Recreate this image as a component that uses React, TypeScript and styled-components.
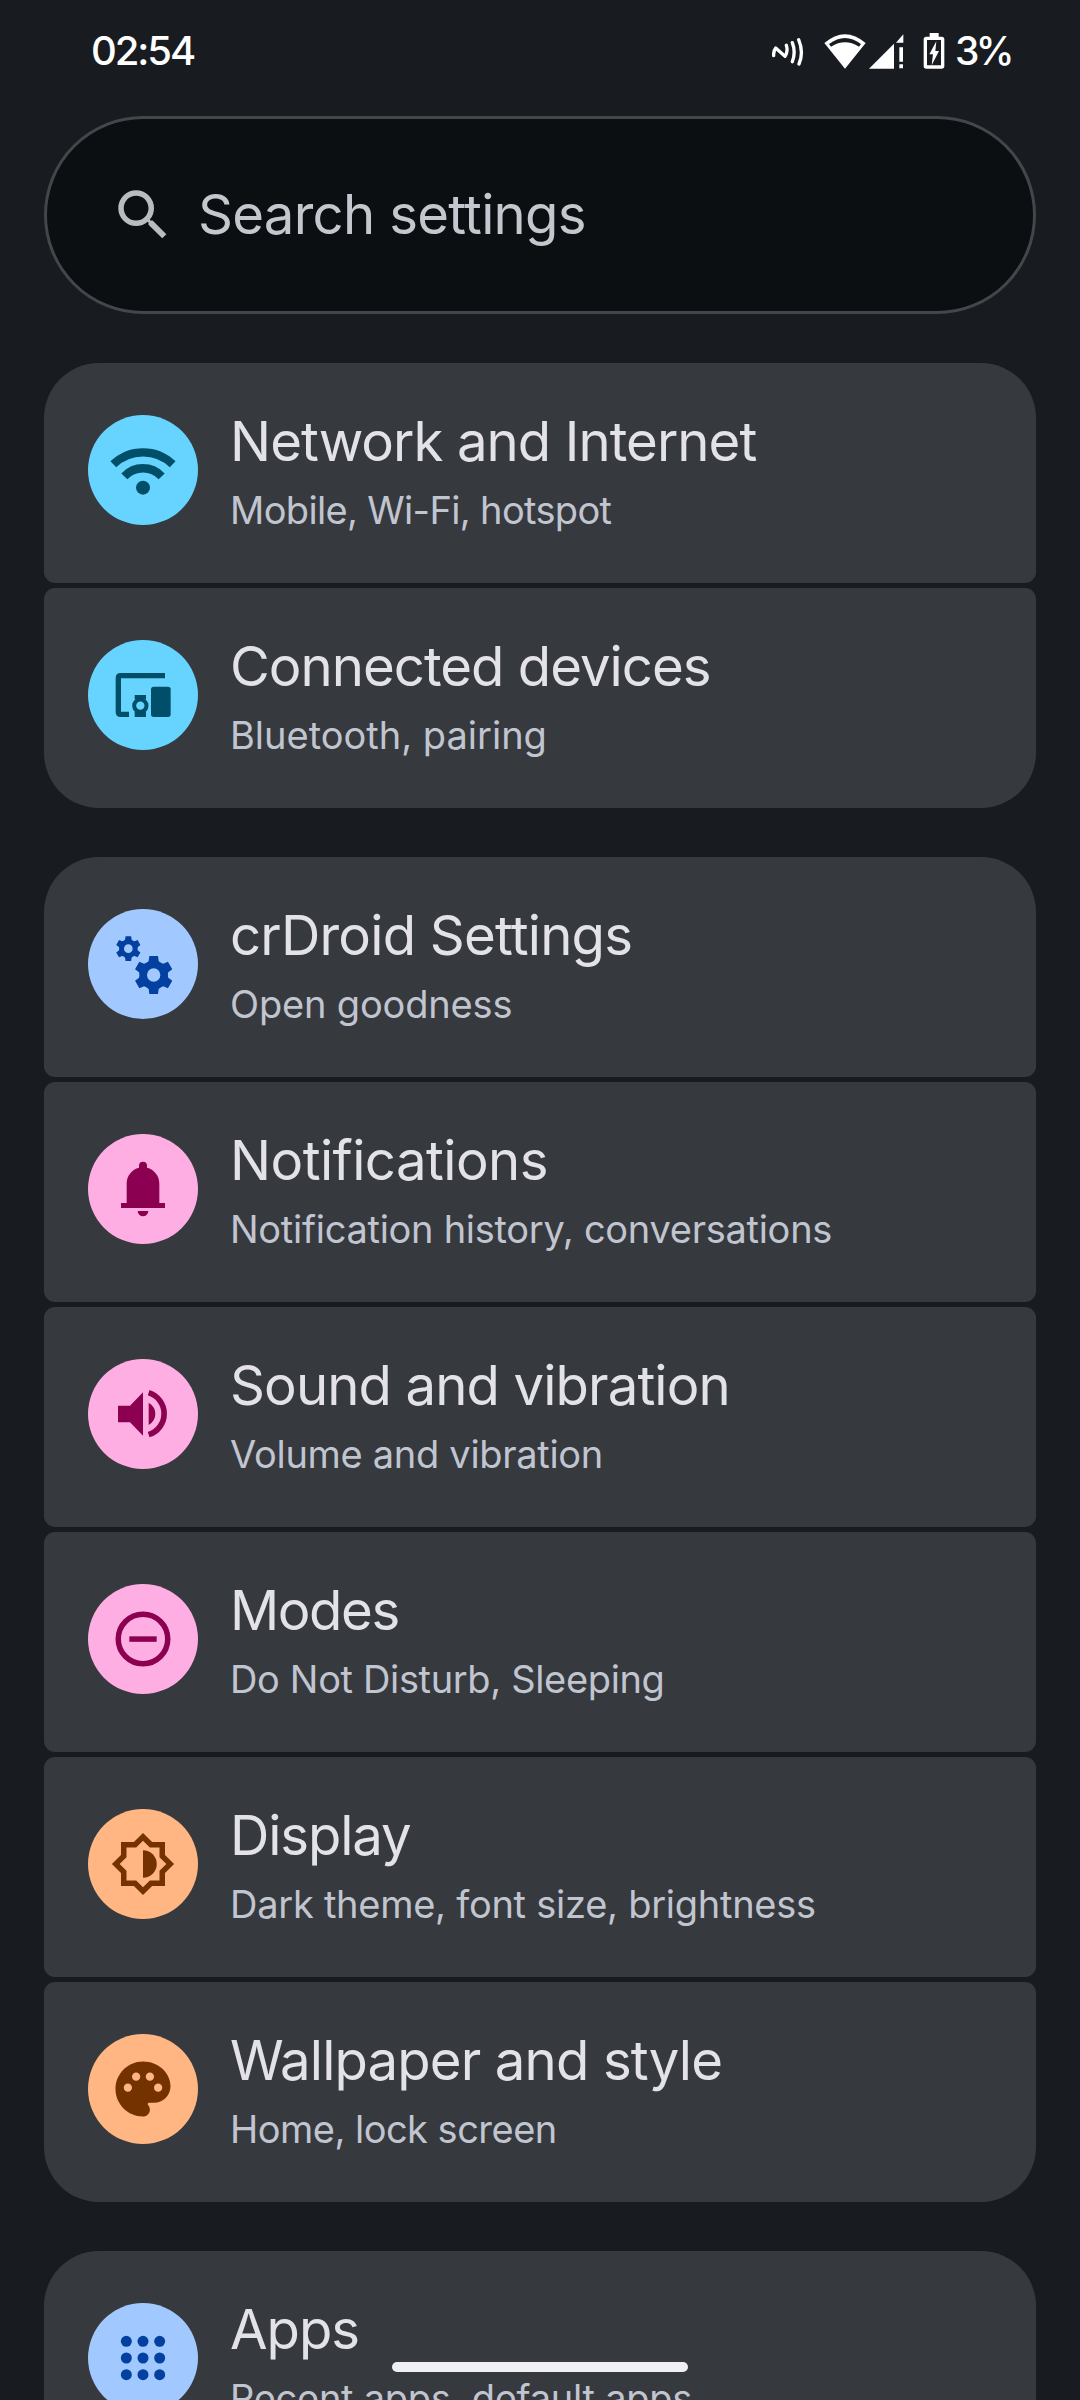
import React from "react";
import styled, { createGlobalStyle } from "styled-components";

const GlobalStyle = createGlobalStyle`
  *, *::before, *::after { box-sizing: border-box; }
  body {
    margin: 0;
    background: #181b20;
    font-family: Inter, Roboto, sans-serif;
  }
`;

const Screen = styled.div`
  position: relative;
  display: flex;
  flex-direction: column;
  width: 1080px;
  height: 2400px;
  overflow: hidden;
  background: #181b20;
`;

const StatusBar = styled.header`
  display: flex;
  align-items: flex-start;
  justify-content: space-between;
  flex: none;
  height: 116px;
  padding: 27px 68px 0 91px;
  color: #fff;
`;

const Clock = styled.time`
  font-size: 40px;
  font-weight: 500;
  line-height: 48px;
  letter-spacing: -2.1px;
`;

const StatusIcons = styled.div`
  display: flex;
  align-items: flex-start;
`;

const StatusGlyph = styled.svg<{ $w: number; $h: number; $top: number; $gap: number }>`
  display: block;
  flex: none;
  width: ${(p) => p.$w}px;
  height: ${(p) => p.$h}px;
  margin: ${(p) => p.$top}px ${(p) => p.$gap}px 0 0;
`;

const BatteryLevel = styled.span`
  width: 57px;
  font-size: 39px;
  font-weight: 500;
  line-height: 48px;
  letter-spacing: -3.6px;
  white-space: nowrap;
`;

const SearchBar = styled.div`
  display: flex;
  align-items: center;
  flex: none;
  height: 198px;
  margin: 0 44px;
  padding: 0 63px;
  border: 3px solid #43474b;
  border-radius: 99px;
  background: #0b0f12;
`;

const SearchIcon = styled.svg`
  width: 66px;
  height: 66px;
  margin-right: 22px;
  fill: #b9bbbc;
`;

const SearchHint = styled.span`
  margin-top: -2px;
  font-size: 54.5px;
  line-height: 64px;
  letter-spacing: -0.72px;
  color: #c4c7cd;
`;

const Groups = styled.main`
  display: flex;
  flex-direction: column;
  gap: 49px;
  padding: 49px 44px 0;
`;

const Group = styled.section`
  display: flex;
  flex-direction: column;
  flex: none;
  gap: 5px;
`;

const Card = styled.a`
  display: flex;
  align-items: flex-start;
  flex: none;
  height: 220px;
  padding-left: 44px;
  border-radius: 11px;
  background: #36393e;

  &:first-child {
    border-top-left-radius: 55px;
    border-top-right-radius: 55px;
  }
  &:last-child {
    border-bottom-left-radius: 55px;
    border-bottom-right-radius: 55px;
  }
`;

const Badge = styled.svg<{ $bg: string; $fg: string }>`
  display: block;
  flex: none;
  width: 110px;
  height: 110px;
  margin: 52px 32px 0 0;
  border-radius: 50%;
  background: ${(p) => p.$bg};
  color: ${(p) => p.$fg};
  fill: ${(p) => p.$fg};
`;

const Labels = styled.div`
  display: flex;
  flex-direction: column;
  gap: 13px;
  padding-top: 46px;
  white-space: nowrap;
`;

const Title = styled.span<{ $track: number }>`
  font-size: 54.5px;
  line-height: 64px;
  letter-spacing: ${(p) => p.$track}px;
  color: #e2e2e8;
`;

const Summary = styled.span<{ $track: number }>`
  font-size: 38px;
  line-height: 48px;
  letter-spacing: ${(p) => p.$track}px;
  color: #c1c5d0;
`;

const GestureBar = styled.div`
  position: absolute;
  left: 392px;
  bottom: 28px;
  width: 296px;
  height: 10px;
  border-radius: 5px;
  background: #f0f0f4;
`;

const sky = { bg: "#67d4ff", fg: "#004e68" };
const blue = { bg: "#a1c9ff", fg: "#0340a0" };
const pink = { bg: "#ffaee4", fg: "#8b0051" };
const orange = { bg: "#ffb683", fg: "#733200" };

type Palette = typeof sky;

function Gear({ x, y, scale }: { x: number; y: number; scale: number }) {
  return (
    <g transform={`translate(${x} ${y}) scale(${scale})`}>
      <circle r="31.5" fill="none" stroke="currentColor" strokeWidth="23" />
      {[0, 60, 120, 180, 240, 300].map((a) => (
        <path key={a} d="M-19 -37L-15 -42L-13 -57H13L15 -42L19 -37Z" transform={`rotate(${a})`} />
      ))}
    </g>
  );
}

const wifiIcon = (
  <>
    <g fill="none" stroke="currentColor" strokeWidth="25">
      <path d="M76 148A128 128 0 0 1 254 148" />
      <path d="M109 184A77 77 0 0 1 221 184" />
    </g>
    <circle cx="165" cy="218" r="21" />
  </>
);

const devicesIcon = (
  <>
    <path d="M231 107H98Q91 107 91 114V216Q91 223 98 223H123" fill="none" stroke="currentColor" strokeWidth="16" />
    <rect x="189" y="140" width="59" height="91" rx="8" />
    <path d="M140 165H174V178H140ZM140 216H174V231H140Z" />
    <circle cx="157" cy="197" r="18.5" fill="none" stroke="currentColor" strokeWidth="12" />
  </>
);

const gearsIcon = (
  <>
    <Gear x={121} y={119} scale={0.65} />
    <Gear x={197} y={198} scale={1} />
  </>
);

const bellIcon = (
  <path d="M99 207H116V149C116 125 132 106 153 101V95A12 12 0 0 1 177 95V101C198 106 214 125 214 149V207H231V222H99ZM149 231H181A16 16 0 0 1 149 231Z" />
);

const volumeIcon = (
  <>
    <path d="M90 140H126L165 100V230L126 190H90ZM182 131Q202 143 202 165Q202 186 182 198Z" />
    <path d="M182 101A66 66 0 0 1 182 227" fill="none" stroke="currentColor" strokeWidth="17" />
  </>
);

const modesIcon = (
  <>
    <circle cx="165" cy="165" r="74.3" fill="none" stroke="currentColor" strokeWidth="16.5" />
    <rect x="124" y="157" width="82" height="16.5" />
  </>
);

const displayIcon = (
  <g transform="translate(66 66) scale(8.25)">
    <path
      fillRule="evenodd"
      d="M20 8.69V4h-4.69L12 .69 8.69 4H4v4.69L.69 12 4 15.31V20h4.69L12 23.31 15.31 20H20v-4.69L23.31 12ZM18 14.48V18h-3.52L12 20.48 9.52 18H6v-3.52L3.52 12 6 9.52V6h3.52L12 3.52 14.48 6H18v3.52L20.48 12Z"
    />
    <path d="M12 7v10a5 5 0 0 0 0-10Z" />
  </g>
);

const paletteIcon = (
  <g transform="translate(66 66) scale(8.25)">
    <path d="M12 2C6.49 2 2 6.49 2 12s4.49 10 10 10c1.38 0 2.5-1.12 2.5-2.5 0-.61-.23-1.2-.64-1.67-.08-.1-.13-.21-.13-.33 0-.28.22-.5.5-.5H16c3.31 0 6-2.69 6-6 0-4.96-4.49-9-10-9Z" />
    <g fill={orange.bg}>
      <circle cx="6.5" cy="11.5" r="1.5" />
      <circle cx="9.5" cy="7.5" r="1.5" />
      <circle cx="14.5" cy="7.5" r="1.5" />
      <circle cx="17.5" cy="11.5" r="1.5" />
    </g>
  </g>
);

const appsIcon = (
  <>
    {[115, 165, 215].map((y) =>
      [115, 165, 215].map((x) => <circle key={`${x}-${y}`} cx={x} cy={y} r="16.5" />)
    )}
  </>
);

interface Entry {
  title: string;
  track: number;
  summary: string;
  summaryTrack: number;
  palette: Palette;
  icon: React.ReactNode;
}

const groups: Entry[][] = [
  [
    { title: "Network and Internet", track: -0.93, summary: "Mobile, Wi-Fi, hotspot", summaryTrack: -0.66, palette: sky, icon: wifiIcon },
    { title: "Connected devices", track: -0.98, summary: "Bluetooth, pairing", summaryTrack: 0, palette: sky, icon: devicesIcon },
  ],
  [
    { title: "crDroid Settings", track: -0.78, summary: "Open goodness", summaryTrack: -0.17, palette: blue, icon: gearsIcon },
    { title: "Notifications", track: -0.55, summary: "Notification history, conversations", summaryTrack: -0.28, palette: pink, icon: bellIcon },
    { title: "Sound and vibration", track: -0.88, summary: "Volume and vibration", summaryTrack: -0.3, palette: pink, icon: volumeIcon },
    { title: "Modes", track: -1.4, summary: "Do Not Disturb, Sleeping", summaryTrack: -0.35, palette: pink, icon: modesIcon },
    { title: "Display", track: -1.1, summary: "Dark theme, font size, brightness", summaryTrack: -0.26, palette: orange, icon: displayIcon },
    { title: "Wallpaper and style", track: -0.86, summary: "Home, lock screen", summaryTrack: -0.52, palette: orange, icon: paletteIcon },
  ],
  [
    { title: "Apps", track: -1, summary: "Recent apps, default apps", summaryTrack: -0.26, palette: blue, icon: appsIcon },
  ],
];

export default function App() {
  return (
    <>
      <GlobalStyle />
      <Screen>
        <StatusBar>
          <Clock>02:54</Clock>
          <StatusIcons>
            <StatusGlyph $w={33} $h={30} $top={10} $gap={19} viewBox="94 80 99 90" fill="none" stroke="#fff" strokeWidth="10" strokeLinecap="round">
              <path d="M99 136Q98 122 105 113L133 138Q143 124 137 105" strokeLinejoin="round" />
              <path d="M155 97Q166 126 155 154M174 88Q190 126 175 161" />
            </StatusGlyph>
            <StatusGlyph $w={42} $h={36} $top={6} $gap={3} viewBox="251 69 126 108">
              <path d="M252 99Q314 46 376 99L314 176Z" fill="#fff" />
              <path d="M266 102Q314 66 362 102L356 110Q314 84 272 110Z" fill="#181b20" />
            </StatusGlyph>
            <StatusGlyph $w={35} $h={35} $top={7} $gap={19} viewBox="386 72 105 105" fill="#fff">
              <path d="M386 176L461 101V176ZM467 98L489 73V98ZM477 112H488V155H477ZM477 163H488V175H477Z" />
            </StatusGlyph>
            <StatusGlyph $w={22} $h={36} $top={6} $gap={10} viewBox="547 69 66 108">
              <rect x="554" y="85" width="52" height="86" rx="3" fill="none" stroke="#fff" strokeWidth="10" />
              <path d="M567 69H594V84H567ZM587 94L566 133H577L573 166L595 123H584Z" fill="#fff" />
            </StatusGlyph>
            <BatteryLevel>3%</BatteryLevel>
          </StatusIcons>
        </StatusBar>

        <SearchBar>
          <SearchIcon viewBox="0 0 24 24">
            <path d="M15.5 14h-.79l-.28-.27A6.47 6.47 0 0 0 16 9.5 6.5 6.5 0 1 0 9.5 16c1.61 0 3.09-.59 4.23-1.57l.27.28v.79l5 4.99L20.49 19l-4.99-5zm-6 0C7.01 14 5 11.99 5 9.5S7.01 5 9.5 5 14 7.01 14 9.5 11.99 14 9.5 14z" />
          </SearchIcon>
          <SearchHint>Search settings</SearchHint>
        </SearchBar>

        <Groups>
          {groups.map((entries) => (
            <Group key={entries[0].title}>
              {entries.map((e) => (
                <Card key={e.title}>
                  <Badge viewBox="0 0 330 330" $bg={e.palette.bg} $fg={e.palette.fg}>
                    {e.icon}
                  </Badge>
                  <Labels>
                    <Title $track={e.track}>{e.title}</Title>
                    <Summary $track={e.summaryTrack}>{e.summary}</Summary>
                  </Labels>
                </Card>
              ))}
            </Group>
          ))}
        </Groups>

        <GestureBar />
      </Screen>
    </>
  );
}
